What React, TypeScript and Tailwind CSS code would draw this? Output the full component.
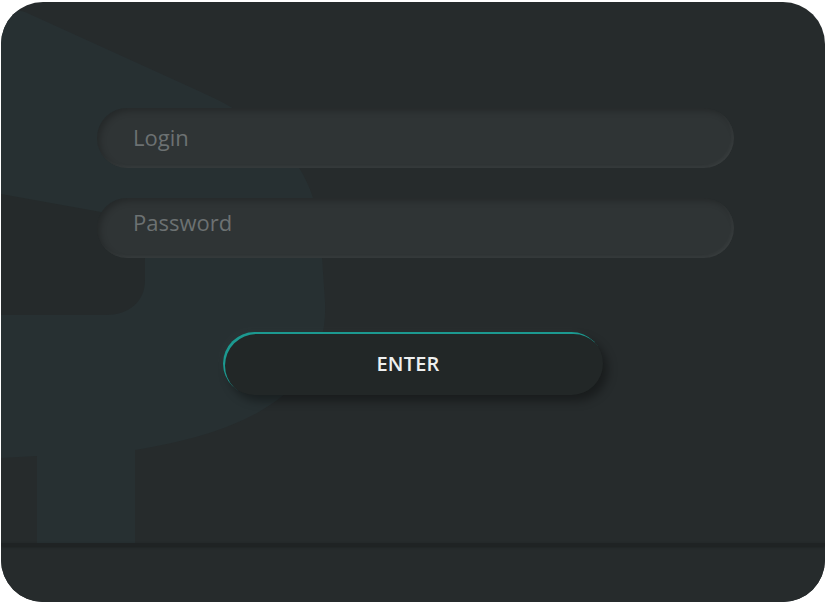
import React from "react";

function Watermark() {
  return (
    <svg
      className="absolute inset-0 pointer-events-none"
      width="824"
      height="600"
      viewBox="0 0 824 600"
      aria-hidden="true"
    >
      <path
        d="M0 4 L24 10 L200 90 C280 126 316 170 320 240 L324 300 C328 380 262 428 134 448 L134 541 L36 541 L36 454 L0 456 Z"
        fill="#273032"
      />
      <path
        d="M0 192 L100 210 C132 216 144 232 144 258 L144 278 C144 300 128 313 104 313 L0 313 Z"
        fill="#252a2b"
      />
    </svg>
  );
}

export default function App() {
  return (
    <div className="w-[826px] h-[602px] bg-white pt-[2px] pl-[1px]" style={{ fontFamily: '"Open Sans", "Noto Sans", sans-serif' }}>
      <div className="relative w-[824px] h-[600px] rounded-[42px] overflow-hidden bg-[#262b2c] flex flex-col">
        <Watermark />
        <div className="relative z-10 h-[541px] pt-[106px]">
          <div className="pl-[96px] pr-[91px] flex flex-col gap-[30px]">
            <div className="h-[60px] rounded-full bg-[#2f3435] shadow-[inset_3px_3px_6px_rgba(0,0,0,0.22),inset_-2px_-2px_3px_rgba(255,255,255,0.045)] flex items-center pl-[36px] pb-[2px]">
              <span className="text-[22px] text-[#6c7172] leading-none">Login</span>
            </div>
            <div className="h-[60px] rounded-full bg-[#2f3435] shadow-[inset_3px_3px_6px_rgba(0,0,0,0.22),inset_-2px_-2px_3px_rgba(255,255,255,0.045)] flex items-center pl-[36px] pb-[12px]">
              <span className="text-[22px] text-[#6c7172] leading-none">Password</span>
            </div>
          </div>
          <div className="mt-[74px] flex justify-center">
            <button className="w-[380px] h-[63px] rounded-full bg-[#222727] shadow-[inset_2px_2px_0_#1c9990,5px_6px_10px_rgba(0,0,0,0.35),-3px_-3px_8px_rgba(255,255,255,0.025)] flex items-center justify-center pr-[10px]">
              <span className="text-[20px] font-semibold text-[#eef0f0] leading-none tracking-[0.2px]">ENTER</span>
            </button>
          </div>
        </div>
        <div className="relative z-10 h-[3px] bg-[#1f2324] shadow-[0_1px_3px_rgba(0,0,0,0.3)]" />
        <div className="flex-1 bg-[#262b2c]" />
      </div>
    </div>
  );
}
